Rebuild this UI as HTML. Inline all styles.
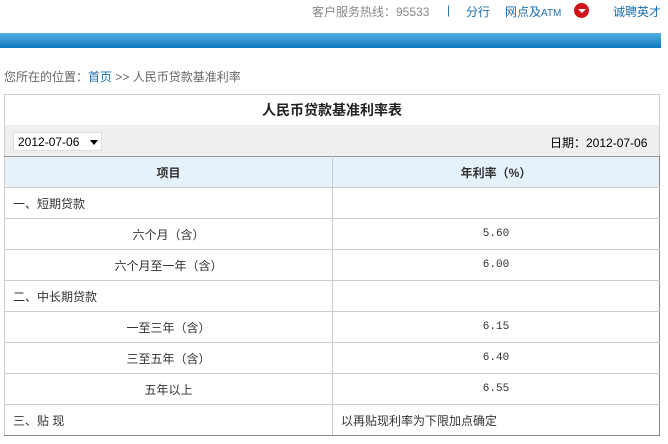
<!DOCTYPE html>
<html><head><meta charset="utf-8"><style>
body{margin:0;width:668px;height:444px;background:#fff;font-family:"Liberation Sans","Noto Sans CJK SC",sans-serif;font-size:12px;color:#333;position:relative;overflow:hidden}
.a{position:absolute;white-space:nowrap}
.bar{position:absolute;left:0;top:33px;width:661px;height:15px;background:linear-gradient(#55b0e0,#0c78c0)}
.box{position:absolute;left:4px;top:94px;width:656px;height:342px;border:1px solid #ccc;border-bottom-color:#888;box-sizing:border-box}
table{position:absolute;left:4px;top:156px;width:656px;border-collapse:collapse}
td{height:30px;border:1px solid #ccc;padding:0 0 0 8px;font-size:12px}
td.c{text-align:center;padding:0}
td.m{font-family:"Liberation Mono",monospace;font-size:11px}
tr.h td{background:#e5f1fb;font-weight:bold;text-align:center;padding:0;border-top:1px solid #999}
table td:last-child{border-right:1px solid #888}
table tr:last-child td{border-bottom:1px solid #888}
</style></head><body>
<div class="a" style="left:312px;top:3px;color:#888">客户服务热线：95533</div>
<div class="a" style="left:447px;top:3px;color:#1a6fb0">|</div>
<div class="a" style="left:466px;top:3px;color:#1a6fb0">分行</div>
<div class="a" style="left:505px;top:3px;color:#1a6fb0">网点及<span style="font-size:10px">ATM</span></div>
<div class="a" style="left:574px;top:3px;width:15px;height:15px;border-radius:50%;background:#d0121b"></div>
<div class="a" style="left:578px;top:9px;width:0;height:0;border-left:4px solid transparent;border-right:4px solid transparent;border-top:4px solid #fff"></div>
<div class="a" style="left:613px;top:3px;color:#1a6fb0">诚聘英才</div>
<div class="bar"></div>
<div class="a" style="left:4px;top:68px;color:#666">您所在的位置：<span style="color:#1a6fb0">首页</span> &gt;&gt; 人民币贷款基准利率</div>
<div class="box"></div>
<div class="a" style="left:5px;top:95px;width:654px;height:30px;border-bottom:1px solid #ddd;text-align:center;line-height:30px;font-size:14px;font-weight:bold;color:#222">人民币贷款基准利率表</div>
<div class="a" style="left:5px;top:125px;width:654px;height:31px;background:#efefef"></div>
<div class="a" style="left:13px;top:132px;width:89px;height:19px;background:#fff;border:1px solid #ddd;line-height:19px;padding-left:4px;box-sizing:border-box;color:#000">2012-07-06</div>
<div class="a" style="left:90px;top:140px;border-left:4px solid transparent;border-right:4px solid transparent;border-top:5px solid #000"></div>
<div class="a" style="left:550px;top:134px;color:#000">日期：2012-07-06</div>
<table>
<tr class="h"><td style="width:327px">项目</td><td>年利率（%）</td></tr>
<tr><td>一、短期贷款</td><td></td></tr>
<tr><td class="c">六个月（含）</td><td class="c m">5.60</td></tr>
<tr><td class="c">六个月至一年（含）</td><td class="c m">6.00</td></tr>
<tr><td>二、中长期贷款</td><td></td></tr>
<tr><td class="c">一至三年（含）</td><td class="c m">6.15</td></tr>
<tr><td class="c">三至五年（含）</td><td class="c m">6.40</td></tr>
<tr><td class="c">五年以上</td><td class="c m">6.55</td></tr>
<tr><td>三、贴 现</td><td>以再贴现利率为下限加点确定</td></tr>
</table>
</body></html>
